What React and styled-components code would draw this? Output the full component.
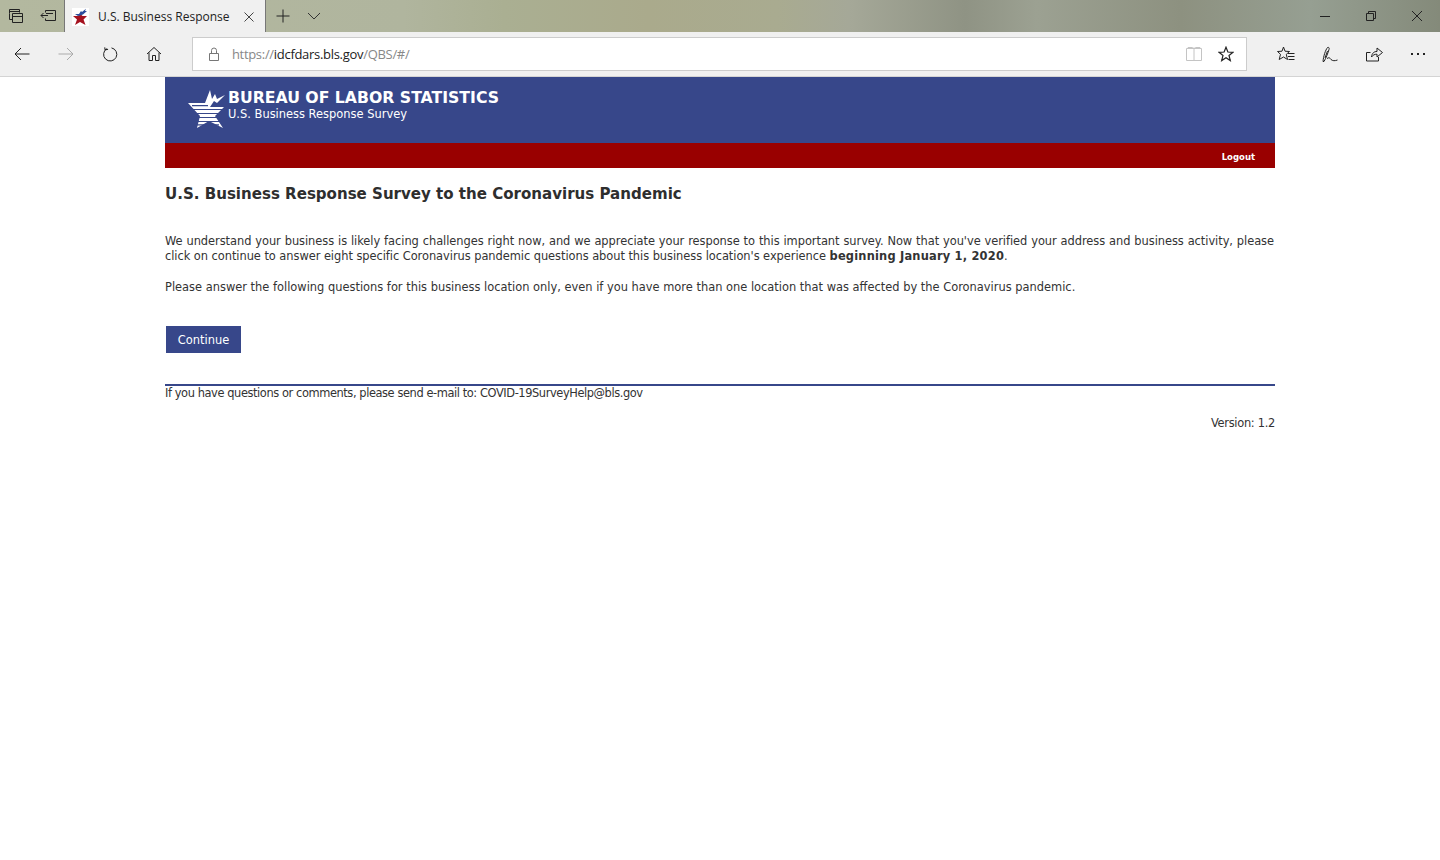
import React from 'react';
import styled, { createGlobalStyle } from 'styled-components';

const GlobalStyle = createGlobalStyle`
  html, body { margin: 0; padding: 0; background: #fff; }
  body { font-family: "DejaVu Sans", sans-serif; overflow: hidden; }
`;

const Icon = ({ size = 16, w, h, vb, children, color = '#222', sw = 1 }) => (
  <svg
    width={w || size}
    height={h || size}
    viewBox={vb || `0 0 ${size} ${size}`}
    fill="none"
    stroke={color}
    strokeWidth={sw}
  >
    {children}
  </svg>
);

const StarPath = 'M8 1.2 L9.9 6 L15 6.3 L11 9.5 L12.3 14.6 L8 11.8 L3.7 14.6 L5 9.5 L1 6.3 L6.1 6 Z';

export default function App() {
  return (
    <>
      <GlobalStyle />
      <TabStrip>
        <SideButton>
          <Icon>
            <path d="M1.5 5.5V1.5H11.5V4.5M1.5 3.5H11.5" />
            <path d="M4.5 5.5H14.5V14.5H4.5ZM4.5 8.5H14.5" />
            <path d="M1.5 5.5V11.5H4.5" />
          </Icon>
        </SideButton>
        <SideButton>
          <Icon>
            <path d="M5.5 4.5V2.5H15.5V12.5H5.5V10.5" />
            <path d="M8 7.5H1M3.5 5L1 7.5L3.5 10" />
            <path d="M6 5.5H13" />
          </Icon>
        </SideButton>
        <Tab>
          <Favicon width="17" height="18" viewBox="0 0 17 18">
            <rect width="17" height="18" fill="#fff" />
            <path d="M1 8 L6 8 L8.5 6 L10.5 8 L15 8 L11.5 11.5 L13.5 17 L8 14 L3 17 L5 11.5 Z" fill="#a5121f" />
            <path d="M3 6 L7 6 L9 3 L10 4 L14 0.8 L13 3 L15 3 L11 6.5 L8 7.5 L6 8 Z" fill="#2b4c9b" />
          </Favicon>
          <TabTitle>U.S. Business Response</TabTitle>
          <Icon size={12} color="#444">
            <path d="M1.5 1.5L10.5 10.5M10.5 1.5L1.5 10.5" />
          </Icon>
        </Tab>
        <StripButton $width={34}>
          <Icon size={14}>
            <path d="M7 0.5V13.5M0.5 7H13.5" />
          </Icon>
        </StripButton>
        <StripButton $width={28}>
          <Icon w={14} h={8} vb="0 0 14 8" color="#333">
            <path d="M1 1L7 7L13 1" />
          </Icon>
        </StripButton>
        <Spacer />
        <WindowButton>
          <Icon size={10}>
            <path d="M0 5.5H10" />
          </Icon>
        </WindowButton>
        <WindowButton>
          <Icon size={10}>
            <path d="M0.5 2.5H7.5V9.5H0.5ZM2.5 2.5V0.5H9.5V7.5H7.5" />
          </Icon>
        </WindowButton>
        <WindowButton>
          <Icon size={12}>
            <path d="M1 1L11 11M11 1L1 11" />
          </Icon>
        </WindowButton>
      </TabStrip>

      <Toolbar>
        <NavButton>
          <Icon w={16} h={14} vb="0 0 16 14">
            <path d="M15.5 7H1M7 1L1 7L7 13" />
          </Icon>
        </NavButton>
        <NavButton>
          <Icon w={16} h={14} vb="0 0 16 14" color="#aaa">
            <path d="M0.5 7H15M9 1L15 7L9 13" />
          </Icon>
        </NavButton>
        <NavButton>
          <Icon>
            <path d="M5 2.6A6.6 6.6 0 1 0 9.5 1.9" />
            <path d="M3 1V3.5H6" transform="rotate(-10 5 3)" />
          </Icon>
        </NavButton>
        <NavButton>
          <Icon>
            <path d="M1 8L8 1.5L15 8M3 6.5V14.5H6.5V9.5H9.5V14.5H13V6.5" />
          </Icon>
        </NavButton>
        <AddressBar>
          <Icon w={12} h={14} vb="0 0 12 14" color="#777">
            <path d="M1.5 6.5H10.5V13.5H1.5ZM3.5 6.5V3.5A2.5 2.5 0 0 1 8.5 3.5V6.5" />
          </Icon>
          <Url>
            https://<strong>idcfdars.bls.gov</strong>/QBS/#/
          </Url>
          <Icon w={16} h={14} vb="0 0 16 14" color="#c4c4c4">
            <path d="M0.5 1.5H15.5V13.5H0.5ZM8 2V13M2 1V0.5H6.5L8 1.5L9.5 0.5H14V1" />
          </Icon>
          <StarSlot>
            <Icon sw={1.2}>
              <path d={StarPath} />
            </Icon>
          </StarSlot>
        </AddressBar>
        <ToolActions>
          <ToolButton>
            <Icon w={18} h={16} vb="0 0 18 16">
              <path d="M6.5 1L8 5.2L12.5 5.5L9.3 8.3L10.5 13.5L6.5 11L2.2 13.5L3.5 8.3L0.5 5.5L5 5.2Z" />
              <path d="M11 7.5H17.5M11 10.5H17.5M11.5 13.5H17.5" />
            </Icon>
          </ToolButton>
          <ToolButton>
            <Icon w={16} h={16} vb="0 0 16 16">
              <path d="M1 15.5C1.5 10 3.5 4 5.5 1.5C7 1 7.5 2 7 3.5C6 7 4 12 2 15.5Z" />
              <path d="M3 12L5.5 5M5 12.5C7 11 8 12 9 13.5C10.5 15 13 15 15.5 14" />
            </Icon>
          </ToolButton>
          <ToolButton>
            <Icon w={17} h={16} vb="0 0 17 16">
              <path d="M0.5 6.5V15H12.5V11M0.5 6.5H4.5" />
              <path d="M5.5 11C6 7 8 5.5 11 5.5V2L16.5 6.5L11 11V8.2C8.5 8.2 7 9 5.5 11Z" />
            </Icon>
          </ToolButton>
          <ToolButton>
            <Dots>
              <Dot />
              <Dot />
              <Dot />
            </Dots>
          </ToolButton>
        </ToolActions>
      </Toolbar>

      <Page>
        <Banner>
          <Logo width="40" height="40" viewBox="0 0 40 40">
            <path
              d="M0 14 L17 14 L22 1 L24 10 L27 5 L29 10 L37 6 L29 14 L26 12 L22 18 L36 18 L27 27 L35 39 L21 32 L9 39 L12 27 Z"
              fill="#fff"
            />
            <path d="M4 16.6H20M5 20.5H35M8 24.5H31M10 28.5H29M9 32.5H31M9 35.8H31" stroke="#37478a" strokeWidth="1.2" />
          </Logo>
          <BannerText>
            <BannerTitle>BUREAU OF LABOR STATISTICS</BannerTitle>
            <BannerSub>U.S. Business Response Survey</BannerSub>
          </BannerText>
        </Banner>
        <RedBar>
          <LogoutLink>Logout</LogoutLink>
        </RedBar>
        <Heading>U.S. Business Response Survey to the Coronavirus Pandemic</Heading>
        <Paragraph>
          We understand your business is likely facing challenges right now, and we appreciate your response to this
          important survey. Now that you've verified your address and business activity, please click on continue to
          answer eight specific Coronavirus pandemic questions about this business location's experience{' '}
          <b>beginning January 1, 2020</b>.
        </Paragraph>
        <Note>
          Please answer the following questions for this business location only, even if you have more than one location
          that was affected by the Coronavirus pandemic.
        </Note>
        <ContinueButton>Continue</ContinueButton>
        <Footer>If you have questions or comments, please send e-mail to: COVID-19SurveyHelp@bls.gov</Footer>
        <Version>Version: 1.2</Version>
      </Page>
    </>
  );
}

// |-----Styling-----|
const TabStrip = styled.div`
  height: 32px;
  display: flex;
  align-items: stretch;
  background: linear-gradient(
    90deg,
    #b3b89f 0%,
    #b0b59e 28%,
    #aaaf92 35%,
    #aaaa8c 45%,
    #a9ab90 54%,
    #a5a898 59%,
    #8f9384 67%,
    #9ca192 72%,
    #8d9180 82%,
    #969f92 91%,
    #848a7a 100%
  );
`;

const SideButton = styled.div`
  width: 32px;
  display: flex;
  align-items: center;
  justify-content: center;
`;

const Tab = styled.div`
  width: 202px;
  box-sizing: border-box;
  padding: 1px 10px 0 7px;
  display: flex;
  align-items: center;
  background: #f0f0f0;
  border-left: 1px solid #777;
  border-right: 1px solid #777;
`;

const Favicon = styled.svg`
  flex: none;
`;

const TabTitle = styled.span`
  flex: 1;
  margin-left: 9px;
  font: 12px/16px "Open Sans", sans-serif;
  color: #222;
  white-space: nowrap;
`;

const StripButton = styled.div`
  width: ${(p) => p.$width}px;
  display: flex;
  align-items: center;
  justify-content: center;
`;

const Spacer = styled.div`
  flex: 1;
`;

const WindowButton = styled.div`
  width: 46px;
  display: flex;
  align-items: center;
  justify-content: center;
`;

const Toolbar = styled.div`
  height: 45px;
  box-sizing: border-box;
  display: flex;
  align-items: center;
  background: #f0f0f0;
  border-bottom: 1px solid #d4d4d4;
`;

const NavButton = styled.div`
  width: 44px;
  display: flex;
  align-items: center;
  justify-content: center;
`;

const AddressBar = styled.div`
  margin-left: 16px;
  width: 1056px;
  height: 34px;
  box-sizing: border-box;
  padding: 0 12px 0 15px;
  display: flex;
  align-items: center;
  background: #fff;
  border: 1px solid #ccc;
`;

const Url = styled.span`
  flex: 1;
  margin-left: 12px;
  font: 13px/16px "Open Sans", sans-serif;
  color: #888;
  letter-spacing: -0.3px;
  strong {
    font-weight: 400;
    color: #222;
  }
`;

const StarSlot = styled.div`
  margin-left: 16px;
  display: flex;
`;

const ToolActions = styled.div`
  flex: 1;
  display: flex;
  align-items: center;
  padding-left: 17px;
`;

const ToolButton = styled.div`
  width: 44px;
  display: flex;
  align-items: center;
  justify-content: center;
`;

const Dots = styled.div`
  display: flex;
  gap: 4px;
`;

const Dot = styled.i`
  width: 2px;
  height: 2px;
  background: #222;
`;

const Page = styled.main`
  width: 1110px;
  margin: 0 auto;
  font: 11.43px/15px "DejaVu Sans", sans-serif;
  color: #333;
`;

const Banner = styled.header`
  height: 66px;
  box-sizing: border-box;
  padding: 12px 0 0 23px;
  display: flex;
  align-items: flex-start;
  background: #37478a;
  color: #fff;
`;

const Logo = styled.svg`
  flex: none;
`;

const BannerText = styled.div`
  margin-top: 1px;
`;

const BannerTitle = styled.div`
  font: 700 15.7px/16px "DejaVu Sans", sans-serif;
`;

const BannerSub = styled.div`
  font: 11.45px/16px "DejaVu Sans", sans-serif;
`;

const RedBar = styled.div`
  height: 25px;
  padding-right: 20px;
  display: flex;
  align-items: center;
  justify-content: flex-end;
  background: #990000;
`;

const LogoutLink = styled.a`
  margin-top: 3px;
  font: 700 8.5px/14px "DejaVu Sans", sans-serif;
  color: #fff;
`;

const Heading = styled.h1`
  margin: 16px 0 0;
  font: 700 15.06px/20px "DejaVu Sans", sans-serif;
  color: #2e2e2e;
`;

const Paragraph = styled.p`
  margin: 30px 1px 0 0;
  text-align: justify;
  letter-spacing: -0.05px;
  b {
    letter-spacing: 0.2px;
  }
`;

const Note = styled.p`
  margin: 16px 0 0;
`;

const ContinueButton = styled.button`
  display: block;
  margin: 31px 0 0 1px;
  width: 75px;
  height: 27px;
  padding: 0;
  border: 0;
  background: #37478a;
  color: #fff;
  font: 11.43px/16px "DejaVu Sans", sans-serif;
`;

const Footer = styled.div`
  margin-top: 31px;
  border-top: 2px solid #37478a;
  line-height: 14px;
  letter-spacing: -0.42px;
`;

const Version = styled.div`
  margin-top: 16px;
  text-align: right;
  letter-spacing: -0.3px;
`;
